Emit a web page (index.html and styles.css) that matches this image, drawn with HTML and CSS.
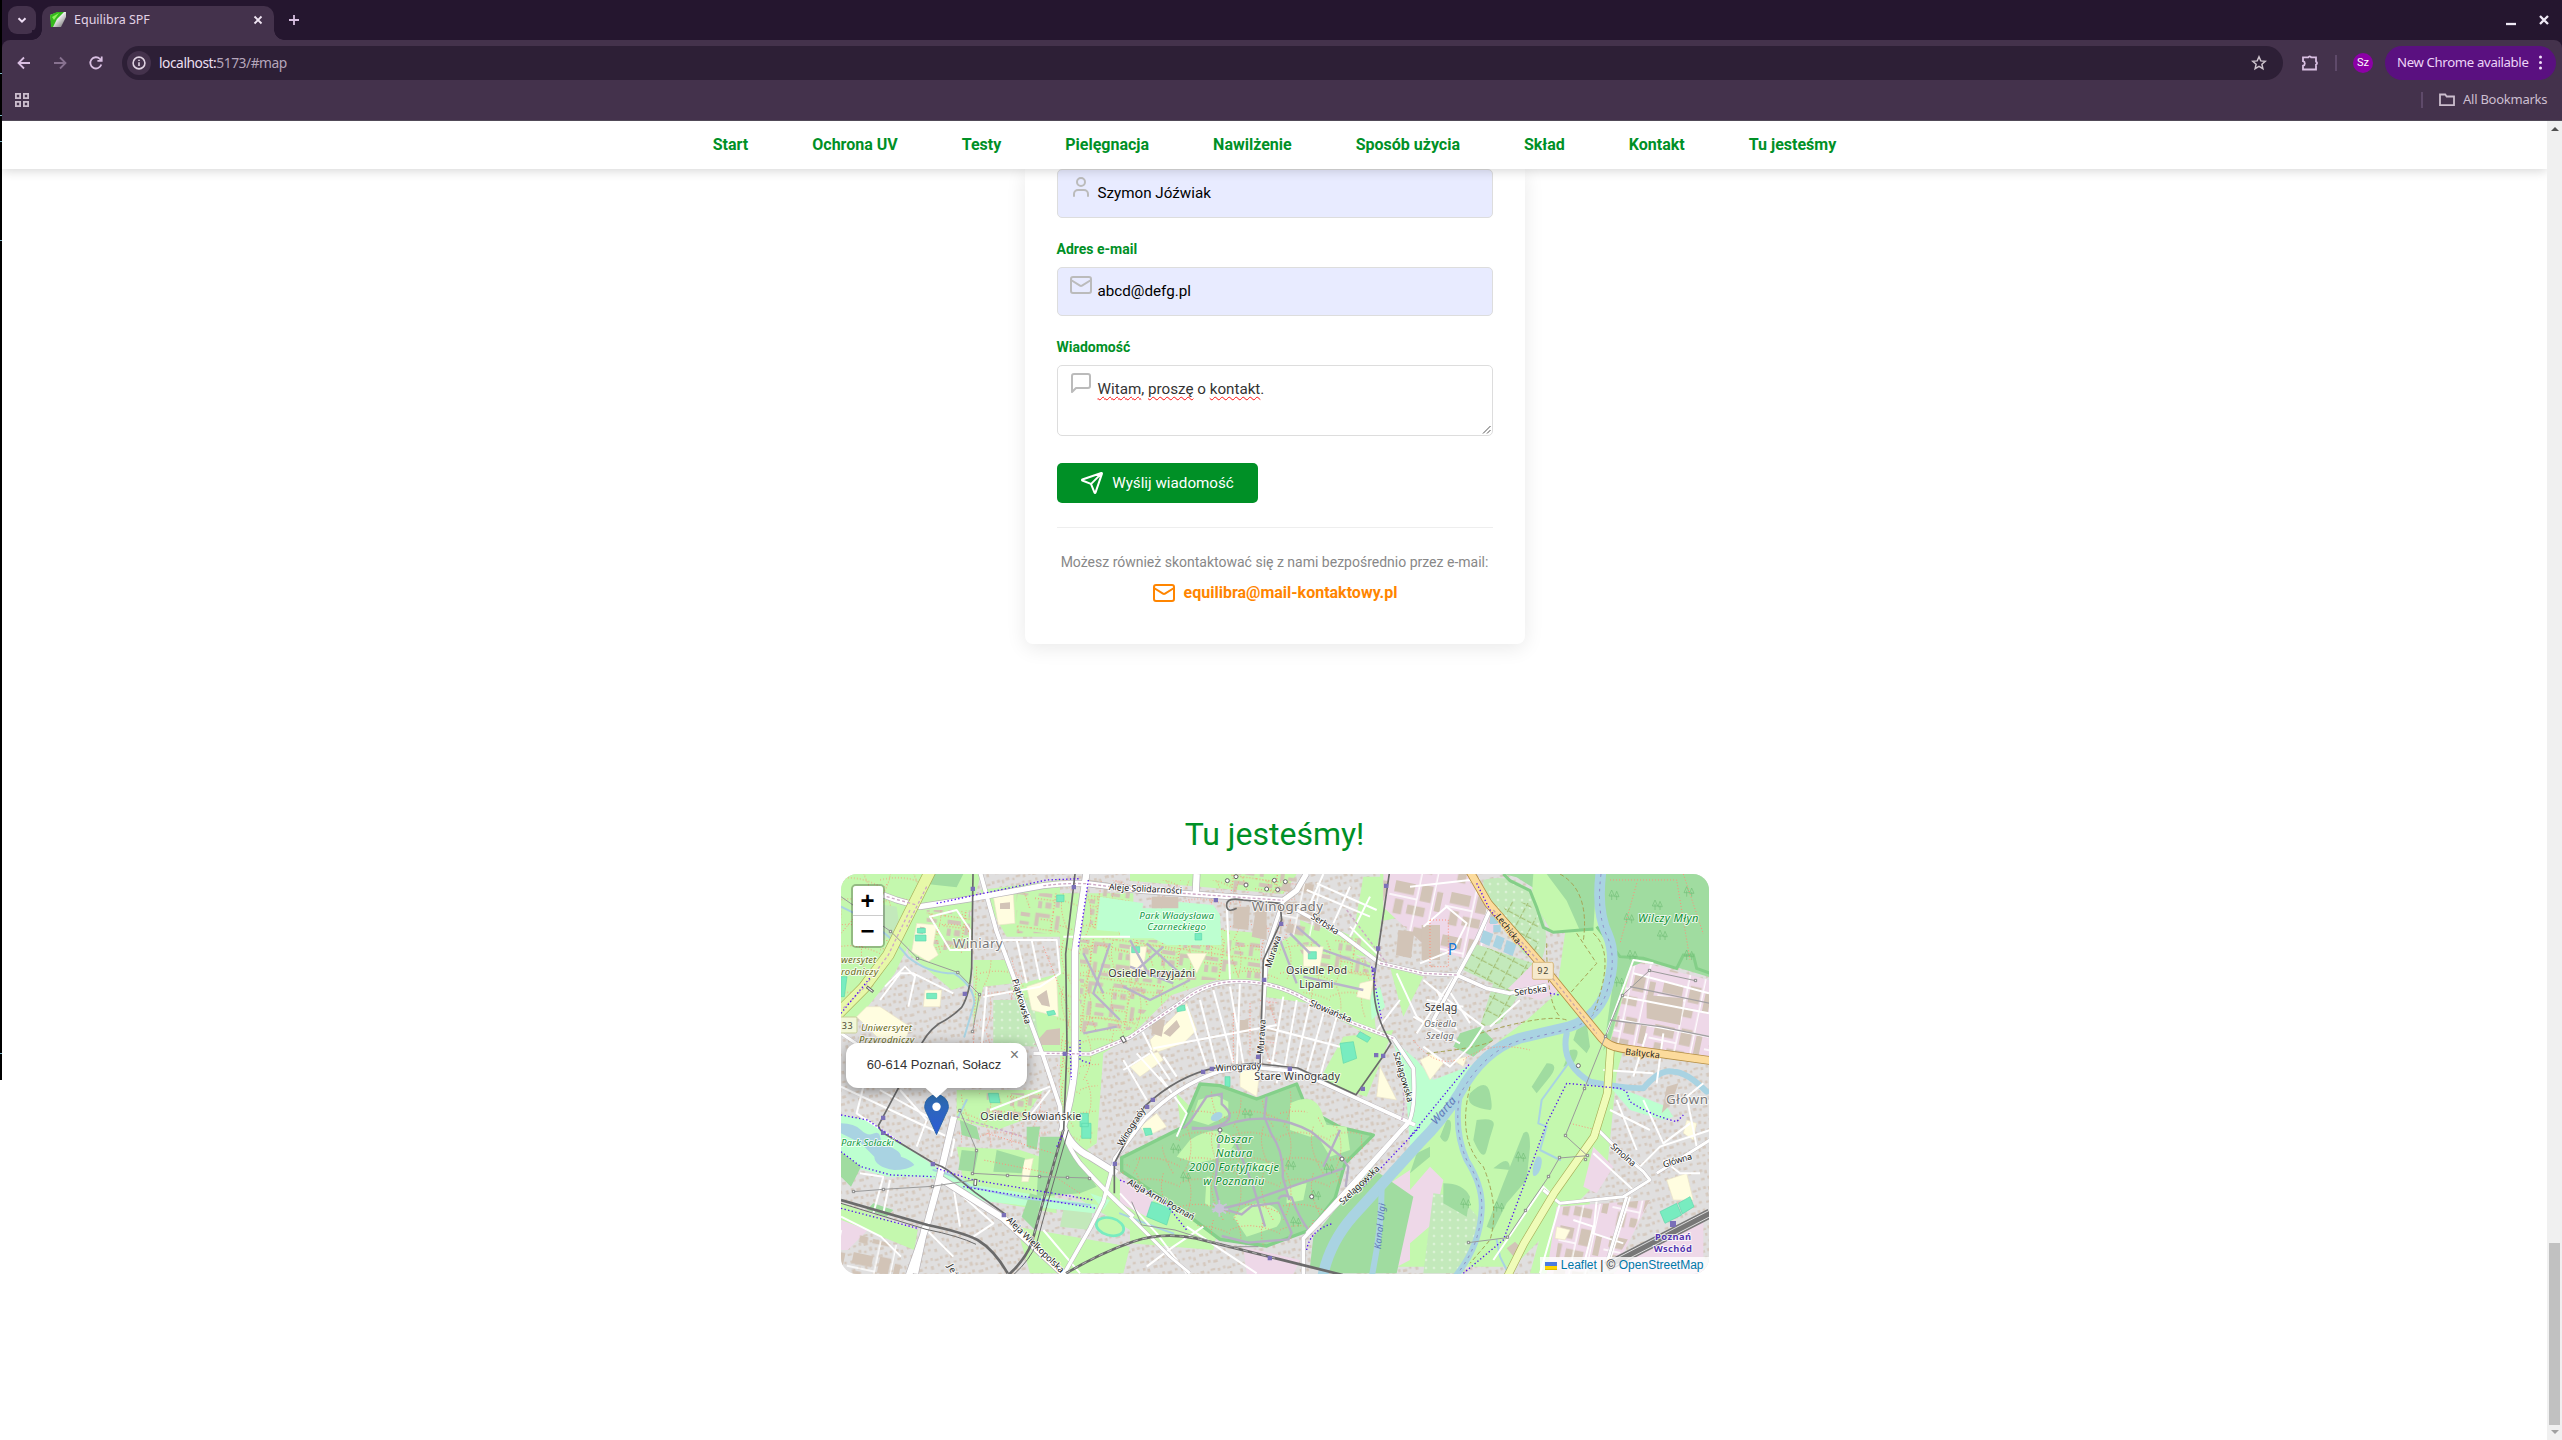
FILE: index.html
```html
<!DOCTYPE html>
<html lang="pl">
<head>
<meta charset="utf-8">
<title>Equilibra SPF</title>
<link rel="stylesheet" href="styles.css">
</head>
<body>
<div class="edge"><i></i><i></i><i></i><i></i><i></i></div>
<div class="window">
  <div class="tabstrip">
    <button class="tab-search"><svg width="12" height="12" viewBox="0 0 12 12"><path d="M2.5 4.2 6 7.7l3.500-3.500"/></svg></button>
    <div class="tab">
      <svg class="favicon" width="16" height="16" viewBox="0 0 16 16"><defs><linearGradient id="fav" x1="0" y1="0" x2="1" y2="1"><stop offset=".4" stop-color="#fff"/><stop offset="1" stop-color="#666"/></linearGradient></defs><path d="M0 3 9 0h7v5l-5 10H2z" fill="url(#fav)"/><path d="M0 3 7 0h7L7 7 3 15H1z" fill="#34b81c"/><path d="M2 5 9 1 4 8z" fill="#8df05c"/></svg>
      <span class="tab-title">Equilibra SPF</span>
      <svg width="10" height="10" viewBox="0 0 10 10"><path d="m1.500 1.500 7 7m0-7-7 7"/></svg>
    </div>
    <svg class="new-tab" width="12" height="12" viewBox="0 0 12 12"><path d="M6 1v10M1 6h10"/></svg>
    <div class="win-controls">
      <svg width="12" height="12" viewBox="0 0 12 12"><path d="M1 10h10"/></svg>
      <svg width="12" height="12" viewBox="0 0 12 12"><path d="m2 2 8 8m0-8-8 8"/></svg>
    </div>
  </div>
  <div class="toolbar">
    <div class="nav-icons">
      <svg width="16" height="16" viewBox="0 0 16 16"><path d="M14 8H3m5-5.500L2.500 8 8 13.500"/></svg>
      <svg class="dim" width="16" height="16" viewBox="0 0 16 16"><path d="M2 8h11M8 2.500 13.500 8 8 13.500"/></svg>
      <svg width="16" height="16" viewBox="0 0 16 16"><path d="M13.300 9.500A5.600 5.600 0 1 1 12 4l1.500 1.500M13.700 1.500v4.300H9.400"/></svg>
    </div>
    <div class="omnibox">
      <span class="info"><svg width="14" height="14" viewBox="0 0 14 14"><circle cx="7" cy="7" r="5.900"/><path d="M7 6.300V10M7 3.800v1.300"/></svg></span>
      <span class="url">localhost:<em>5173/#map</em></span>
      <svg width="16" height="16" viewBox="0 0 16 16"><path d="m8 1.800 1.800 4.100 4.500.4-3.400 3 1 4.400L8 11.400l-3.900 2.300 1-4.400-3.400-3 4.500-.4z"/></svg>
    </div>
    <svg class="puzzle" width="18" height="18" viewBox="0 0 18 18"><path d="M2 3.400h5.200a1.600 1.600 0 0 1 3 0h4.800v4.200a1.600 1.600 0 0 1 0 3v4.900H2v-3.800a2.300 2.300 0 0 0 0-4.500z"/></svg>
    <span class="sep"></span>
    <span class="avatar">Sz</span>
    <div class="update"><span>New Chrome available</span><i></i></div>
  </div>
  <div class="bookmarks">
    <svg width="14" height="14" viewBox="0 0 14 14"><path d="M.9.900h4.200v4.200H.9zM8.900.900h4.200v4.200H8.900zM.9 8.900h4.200v4.200H.9zM8.900 8.900h4.200v4.200H8.900z"/></svg>
    <span class="sep"></span>
    <svg width="16" height="14" viewBox="0 0 16 14"><path d="M1 12.200V1.500h5.200l1.500 2H15v8.700z"/></svg>
    <span class="bm-label">All Bookmarks</span>
  </div>
  <div class="viewport">
    <div class="page">
      <nav class="site-nav">
        <a>Start</a><a>Ochrona UV</a><a>Testy</a><a>Pielęgnacja</a><a>Nawilżenie</a><a>Sposób użycia</a><a>Skład</a><a>Kontakt</a><a>Tu jesteśmy</a>
      </nav>
      <section class="card">
        <div class="field filled">
          <svg class="icon" viewBox="0 0 24 24"><path d="M19 21v-2a4 4 0 0 0-4-4H9a4 4 0 0 0-4 4v2"/><circle cx="12" cy="7" r="4"/></svg>
          <span>Szymon Jóźwiak</span>
        </div>
        <label>Adres e-mail</label>
        <div class="field filled">
          <svg class="icon" viewBox="0 0 24 24"><rect x="2" y="4" width="20" height="16" rx="2"/><path d="m22 7-8.970 5.700a1.940 1.940 0 0 1-2.060 0L2 7"/></svg>
          <span>abcd@defg.pl</span>
        </div>
        <label>Wiadomość</label>
        <div class="field message">
          <svg class="icon" viewBox="0 0 24 24"><path d="M21 15a2 2 0 0 1-2 2H7l-4 4V5a2 2 0 0 1 2-2h14a2 2 0 0 1 2 2z"/></svg>
          <span><u>Witam</u>, <u>proszę</u> o <u>kontakt</u>.</span>
          <svg class="grip" viewBox="0 0 9 9"><path d="M1 8.500 8.500 1M5 8.500 8.500 5"/></svg>
        </div>
        <button class="send"><svg class="icon" viewBox="0 0 24 24"><path d="M14.536 21.686a.5.5 0 0 0 .937-.024l6.500-19a.496.496 0 0 0-.635-.635l-19 6.500a.5.5 0 0 0-.024.937l7.930 3.180a2 2 0 0 1 1.112 1.110zM21.854 2.147l-10.940 10.939"/></svg>Wyślij wiadomość</button>
        <div class="direct">
          <p>Możesz również skontaktować się z nami bezpośrednio przez e-mail:</p>
          <a><svg class="icon" viewBox="0 0 24 24"><rect x="2" y="4" width="20" height="16" rx="2"/><path d="m22 7-8.970 5.700a1.940 1.940 0 0 1-2.060 0L2 7"/></svg>equilibra@mail-kontaktowy.pl</a>
        </div>
      </section>
      <h2>Tu jesteśmy!</h2>
      <div class="map">
<svg class="tiles" width="868" height="400" viewBox="33 222 2604 1200">
<defs>
  <pattern id="houses" width="141" height="117" patternUnits="userSpaceOnUse" patternTransform="rotate(-14)"><path fill="#d5c9be" d="M4 4h9v8H4zM18 7h7v10h-7zM31 3h11v8H31zM50 8h7v8h-7zM62 3h14v7H62zM83 6h8v9h-8zM100 3h7v8h-7zM112 8h12v7h-12zM129 4h8v9h-8zM7 24h8v11H7zM25 27h9v7h-9zM43 24h7v8h-7zM57 28h13v8H57zM77 24h7v7h-7zM95 27h9v11h-9zM117 24h7v8h-7zM3 47h13v7H3zM22 50h8v9h-8zM37 44h9v9h-9zM53 50h8v8h-8zM70 43h9v12h-9zM86 49h8v8h-8zM101 52h12v8h-12zM122 44h9v8h-9zM6 69h8v8H6zM19 74h8v11h-8zM39 69h12v8H39zM58 72h8v8h-8zM72 67h8v9h-8zM91 73h14v7H91zM112 70h8v9h-8zM128 68h8v8h-8zM4 95h11v8H4zM24 92h8v9h-8zM44 96h8v12h-8zM60 93h8v8h-8zM76 97h13v8H76zM99 92h8v8h-8zM118 96h8v10h-8z"/></pattern>
  <pattern id="blocks" width="130" height="120" patternUnits="userSpaceOnUse" patternTransform="rotate(8)"><path fill="#d2c4b7" d="M8 8h44v12H20v28H8zM70 10h12v42H70zM94 12h28v12H94zM94 38h28v11H94zM10 66h40v12H10zM64 70h44v11H76v24H64zM12 92h12v22H12zM34 94h18v18H34z"/><path fill="none" stroke="#ff7d70" stroke-width="3" stroke-dasharray="3 6" d="M60 0v120M0 56h130M88 58l30 58M26 26h34v26M0 86h60"/></pattern>
  <pattern id="sheds" width="170" height="130" patternUnits="userSpaceOnUse" patternTransform="rotate(12)"><path fill="#d2c4b7" d="M12 12h60v34H12zM92 8h34v50H92zM140 20h18v60h-18zM20 66h26v44H20zM60 76h54v28H60z"/><path fill="none" stroke="#fff" stroke-width="4" d="M0 56h84v74M84 0v56M132 0v130"/></pattern>
  <pattern id="paths" width="150" height="140" patternUnits="userSpaceOnUse"><path fill="none" stroke="#fb8a70" stroke-width="3" stroke-dasharray="3 6" d="M0 30q60-30 150 10M20 0q30 70-10 140M0 100q80-20 150 20M100 0q-20 60 30 140"/></pattern>
  <pattern id="plots" width="42" height="42" patternUnits="userSpaceOnUse" patternTransform="rotate(28)"><path fill="none" stroke="#9fb86a" stroke-width="3" stroke-dasharray="15 7" d="M0 10h42M20 0v42"/></pattern>
  <pattern id="crosses" width="24" height="24" patternUnits="userSpaceOnUse"><path stroke="#edfbe8" stroke-width="2" d="M12 8v8M8 12h8"/></pattern>
  <linearGradient id="pin" x1="0" y1="0" x2="0" y2="1"><stop offset="0" stop-color="#2e6cad"/><stop offset="1" stop-color="#2b5bd7"/></linearGradient>
</defs>
<rect x="33" y="222" width="2604" height="1200" fill="#e0dfdf"/>
<rect x="33" y="222" width="2604" height="1200" fill="url(#houses)"/>

<g fill="#c4f8ae">
  <path d="M33 222h420l-30 110-80 50-60-40-90 180-90 110-70 60zM240 350l150-30 35 30v200l-60 20-60-50-70-60zM450 270l240-30v170l-160 0zM430 480h100l20 70-90 10-30 120zM540 560l150-40 10 250-60-10zM690 280h220v140l180 100-190 190-80 50-20 270-110 70z"/>
  <path d="M380 870h260l-60 90-80 30-120-30zM380 1040l190 10 90 30 20 160-270-50zM700 980l200 190v120l-180-110z"/>
  <path d="M900 222h500l-40 60-460-40zM870 360l420 40v150l-130-10-150 50-140 90zM1330 440l100-60 190 110 20 230-200-110-140-20zM1410 360l120 50 90 110v70l-200-60z"/>
  <path d="M1480 820l60-110 150-20-80 200-130-40zM1600 230h75l-40 250-70-50zM1660 222h120l-30 30-60 80zM1040 880l60 60 60 50-100 60zM1680 500l100 30-60 120z"/>
  <path d="M1770 1000l240-280 80-60 90-80 50-360h300l-170 600-30 300-280 280h-590l120-160z"/>
  <path d="M1480 370l90 40 40 60-160-30zM1650 222h150v110l-140 30z"/>
  <path d="M33 1210l230 80-10 60-220-90zM560 1280l340 60-20 80H600zM900 1160l260 140-10 50-250-20zM2150 1240l130-40-10 110-90 110h-80z"/>
</g>
<path fill="url(#blocks)" d="M290 330h130v120H290zM560 280h130v120H560zM750 420l150-10 150 100-150 180-150 10zM900 420h390v120H900zM1290 600h50v190h-60zM1400 430l190-20 30 120-180-20zM470 880h170l-50 80-120-10zM1200 220h200v60h-200zM780 240h120v150H780z"/>
<path fill="url(#paths)" opacity=".85" d="M33 222h240l-130 330-110 60zM290 330h140v130H290zM430 480h150l50 260-200-10zM690 240h210v160h190v160l-200 150-80 50-20 270-100 20-10-300zM900 240h500v300l-200-10zM1330 400l300 80v180l-200-60zM380 880h260l20 170-280-20z"/>

<g fill="#eed8e8">
  <path d="M1660 222h280l80 130-90 130-140-40-130-120zM2030 480l100 20 60 70-60 30-110-30zM2410 480l227 60v240l-300-40zM2620 1260v162h-270l60-60zM33 1260l80 30-60 60-20 0zM1240 1340l170 40-20 42h-140zM1680 1150l60-40v270l-80 42v-150zM1740 1170l60-70 40 40-30 130-70 60zM870 1130l100 70-20 50-80-40z"/>
  <path d="M2290 1040l60 60-50 80-40-20zM2180 1220l280-20-90 180-140 42h-80z"/>
</g>
<path fill="url(#sheds)" d="M1660 222h280l80 130-90 130-140-40-130-120zM2410 480l227 60v240l-300-40zM2200 1220l260-20-90 160-100 62h-100zM33 1290l220 60-20 72H33zM1350 250h120v160h-120z"/>

<g fill="#c3e9bb">
  <path d="M490 600h120l20 140-140-5zM130 310l70 10 10 70-50 30-60-60zM700 1230l90-20-10 80-90-10zM1810 1180l80 10 70 80-60 150h-120zM1960 240q80-20 140 30l40 80q20 80-10 140l-50-30-120-170z"/>
  <path d="M1930 430l180 60-80 80-130-60zM1990 550l80 30-60 90-60 10z"/>
</g>
<path fill="url(#crosses)" d="M490 600h120l20 140-140-5zM1810 1180l80 10 70 80-60 150h-120zM1960 240q80-20 140 30l40 80-10 140-170-200z"/>
<path fill="url(#plots)" d="M2010 300l90 10 30 80-10 70-60-60zM1930 430l180 60-80 80-130-60zM1990 550l80 30-60 90-60 10z"/>

<g fill="#bdffd0">
  <path d="M33 945l80 15 100 70 110 75 110 50 370 60-10 25-360-40-100-60-70-10-90 0-90-25-51-50z"/>
  <path d="M810 290l130 20-20 90-120-10zM870 325l130 0 40-20 110 10 20 30 5 90-165 0-40-20-100 0zM1690 720l70 60 50 60 130-50-130 190-70 60-10-140zM2340 860l70 20 100 40 20 30-30 10-100-30zM780 1180l60 20-20 30z"/>
  <path d="M1620 580l30-20 15 60-40 40z"/>
</g>
<g fill="#a9d3e2"><path d="M33 970q40 0 60 20t40 10 20 30q60 20 60 40 30 10 40 25-20 15-60 15-60-10-60-40l-40-40-60-30z"/><path d="M2120 1070q18-5 15 20t-15 35-12-10 12-45zM1980 350h16a11 11 0 0 1 0 22h-16zM1960 390l30 12-12 36-28-12zM2000 405l24 10-12 34-24-10zM2030 420l30 12-12 36-28-12zM1990 375h22v22h-22z"/></g>

<g fill="#fffde0" stroke="#ece4c8" stroke-width="2">
  <path d="M260 370l60 5-10 60 15 30-30 20-50-30zM490 290l60-10 5 90-50 5zM150 620l90 60-20 60-80-30-60-60 30-30zM590 560l90-30 5 120-80-20zM285 570h50l-5 50h-50zM580 1080l30-5-15 70h-20zM960 720l110-110 30 80-40 40-90 30zM900 440h50l-10 70h-40zM930 830l70-50-20-30-80 50zM1070 460l60 0-30 60zM1420 440l60 0-10 60-50 0zM1590 550l40-10-10 60-40-10zM1230 810l60 0-10 80-50-30zM1650 800l50 100-60-10zM930 980l50-40 30 40-60 30zM1770 780l40-20 30 30-40 50zM1870 780l40-10-10 30zM2510 1140l60-20 20 80-60 0zM2570 960l30 10-10 50-30-20zM2180 1280l40 10-15 30-30-5z"/>
</g>
<path fill="#d2c4b7" d="M650 690l40-5v50l-80 0zM965 290l80 0v35l-80 0zM1210 320l50 0-5 70-45-5zM1280 310l30 0v110l-45-10zM1775 375h55v105h-55zM1705 390l48 5-10 80-45-10zM965 650l40 10-10 50-30-10zM2450 585l110 10-10 80-100-20zM2510 860l35-10-20 60-30 30zM1230 660l25 0v40h-25zM620 590l30-20 10 50-25-5zM2030 1345l25-20 20 20-20 30zM270 380l14 2-5 20-14-2zM510 310l30-3v20h-30zM1000 700l40-40 10 20-30 30z"/>
<g fill="#78ecc0" stroke="#5dd8ac" stroke-width="2">
  <path d="M262 385h24v14h-24zM256 405h32v18h-32zM290 580h30v16h-30zM660 1080l50-10 20 10-30 80-50-10zM750 940h25v40h-25zM755 970h28v45h-28zM650 635l22-4 5 12-22 4zM475 880l30 0 5 28-30 0zM393 1082h22v24h-22zM680 285h22v20h-22zM33 530l18 0-8 60-10 0zM1530 730l40-5 10 50-40 15zM1590 695l32 18-10 14-32-18zM1095 400l20 0 0 20-20 0zM905 440h24v18h-24zM1040 620l24-5 2 16-24 4zM965 1205l60 20-15 50-60-25zM940 985l22 0 5 18-20 4zM2490 1235l50-25 15 35-50 25zM2545 1210l35-20 12 30-35 22zM1185 830l15 0 0 30-15 0zM1435 455h24v22h-24z"/>
</g>
<ellipse cx="840" cy="1280" rx="42" ry="26" fill="#c4f8ae" stroke="#78ecc0" stroke-width="8" transform="rotate(15 840 1280)"/>

<g fill="#a0dca0">
  <path d="M305 222h95l-20 40-90-10zM390 960l50 20 10 40-55-15zM395 1050l50 5-12 60-48-5zM500 1050l85 25-10 45-85-5zM590 980l40 0-10 70-30-10zM630 1010l70 0 100 150-50 20-130 10zM600 1180l35 10-20 100-40-40zM33 1055l60 45-30 60-30-30zM130 1210l60 20-20 20-60-20z"/>
  <path d="M2020 222h280l-10 170-90 0-60-110-80-50zM2310 222h330v310l-100-30-90-20-50 20-60 220-20 30 40-280-40-80z"/>
  <path d="M1620 1100l130 90-50 230h-180l-80-20 10-90zM1890 700l60-20 40 40-60 50-60-30zM2240 690l30-20 10 70-10 20-40-40z"/>
  <path d="M1920 880q50-50 60 0t0 50q-80-10-60-50zM1940 960q60-10 50 20t-20 70-40-30zM2080 1000q20-20 20 40l-10 100-60 70-40 80-20-10 50-130zM1850 960q20-5 10 40t-30 10zM2150 790q40 0 10 40l-40 50-15-20zM2010 1090q30-20 30 20l-50-5zM1760 1060l40-20 0 30-60 50zM1840 1150q60 0 80 40l-10 60-70-40zM2220 750q40-10 10 40l-30 10z"/>
</g>
<path d="M2110 222q-10 110 10 100 40 60 40 70 50 5 90 0l-40-90-60-80z" fill="#c4f8ae"/>
<path d="M2020 222l20 20 60 30 20 50 20 60 30 15 120-10M2300 380l70 90 70 5 100 30 20-40h30l10 40 40 15" fill="none" stroke="#84cf88" stroke-width="9"/>

<!-- forest reserve -->
<path fill="#a0dca0" stroke="#84d08a" stroke-width="10" stroke-linejoin="round" d="M1110 852l60 5 110 40 120-45 30 75 100 55 100 23-85 85-30 105-75 95-130 48-140-20-100-75-195-130v-40l180-90z"/>
<g fill="#c4f8ae"><path d="M1085 960l20-60 50-15 40 20v40l-60 30zM1080 1020q60-40 110-20l30 20-30 50-90 20-60-20zM1380 910q80-40 100 40l20 50-60 10-60-20zM1440 970l110 10 10 70-60 20zM1210 1250q60-60 120-30 40 30 10 60l-90 30zM1370 1160l60-10-10 50-50 10zM1270 1090l60 0-10 20-50-5zM1130 1130l10 0 0 90-15-10z"/></g>
<path fill="url(#paths)" d="M1110 862l170 45 120-45 30 75 200 80-85 85-30 105-75 95-130 40-140-20-295-195v-30l180-90z"/>
<g fill="none" stroke="#b5aec3" stroke-width="7"><path d="M1060 985l20-20 50-75 45-8v30q60 50-30 70l-60 5M1170 990l-15 170 15 60M1085 983l60 5 70-22q120-30 230 30l90 75 20 30-8 60M1310 890l-7 60 20 50q40 60 35 130l20 70M1160 1230l80-20 300-105M1210 1010l60 150 35 120M1530 990l-50 110M1175 1225l60 18 30-25 80-10 40 90-10 20-120 10-80-20M1345 1198q10-20 40-5 20 60 60 110"/></g>
<g stroke="#c9c4d8" stroke-width="5"><path d="M1148 1210l40 30M1190 1212l-42 24M1168 1200v50M1145 1228h50"/></g>
<circle cx="1168" cy="1225" r="14" fill="#c9c4d8"/><ellipse cx="1160" cy="950" rx="19" ry="12" fill="#a9d3e2" transform="rotate(-30 1160 950)"/>
<g fill="none" stroke="#74bf78" stroke-width="2"><path id="tree" d="M1030 1060v-18m-8 6 8-18 8 18zM1045 1060v-14m-6 4 6-16 7 16z"/><use href="#tree" x="30" y="85"/><use href="#tree" x="215" y="-105"/><use href="#tree" x="345" y="50"/><use href="#tree" x="420" y="140"/><use href="#tree" x="360" y="220"/><use href="#tree" x="460" y="60"/><use href="#tree" x="1315" y="-760"/><use href="#tree" x="1445" y="-730"/><use href="#tree" x="1540" y="-770"/><use href="#tree" x="1460" y="-640"/><use href="#tree" x="1540" y="-580"/><use href="#tree" x="1370" y="-580"/><use href="#tree" x="1360" y="-690"/><use href="#tree" x="1330" y="-500"/><use href="#tree" x="1035" y="25"/><use href="#tree" x="870" y="165"/><use href="#tree" x="970" y="175"/></g>

<!-- waterways -->
<g fill="none" stroke="#a9d3e2" stroke-linecap="round" stroke-linejoin="round">
  <path stroke-width="32" d="M2313 215q-15 120 20 190 30 70-5 170-30 80-110 105l-150 35q-110 35-180 165-50 80-120 150l-200 220q-70 80-90 180"/>
  <path stroke-width="18" d="M1890 880q-20 110 20 200 50 80 45 150-5 110-80 200M1655 1160q0 130-30 270M2210 700q-20 90 70 145 100 20 160 20 50-60 90-50 40 0 100 60"/>
  <path stroke-width="6" d="M33 320q130 60 200 150 60 50 140 50 60 40 60 90l-30 100M410 900q-20 40-25 50M310 1110q80 20 110 50l160 35 200 20M2215 790l-80 110-10 70 25 10-20 70 60 30M870 1240q100 40 160 60M2000 1320l10 50 20 40"/>
</g>
<g fill="none" stroke="#8d8bc4" stroke-width="3" stroke-dasharray="8 14"><path d="M2313 222q-15 120 20 190 30 70-5 170-30 80-110 105l-150 35q-110 35-180 165M1890 880q-20 110 20 200 50 80 45 150-5 110-80 200"/></g>
<g fill="none" stroke="#a6a255" stroke-width="3" stroke-dasharray="13 8"><path d="M2290 400q70 60 0 240M2190 222q90 50 70 200M1950 700q200-60 260-40M1920 860q-40 160 40 240 50 120 20 220l-60 70M2150 430q0 180 40 220M1790 760q180-20 200-40M2240 400l60 90-80 90"/></g>

<!-- minor streets -->
<g fill="none" stroke="#fff" stroke-width="6" stroke-linejoin="round">
  <path d="M530 420l-60 10M500 420h180l10 100-60 40-170 30M560 420l30 130M605 420l25 120M470 560l-15 180M150 600l60-80h40l120 60M165 560l60-60 30 30-20 90M300 350l80-20 40 60v60h-60zM100 860l-20 80 120 80M150 870l180 100M210 870l80 90-30 80M33 860l340 160-10 50M480 930l180-70M590 960l70-90M700 410h200M90 1120l70 10-30 110M180 1140l-20 100M370 1160l20 120M400 1190l90 80-60 40M33 1250l120 60 60 60M290 1290l80 80M640 1290l110 130"/>
  <path d="M970 745l370-70M935 690l30 60M1070 620l60 180M1110 600l50 200M1150 570l60 220M1200 560l40 230M960 760l-80 50M880 780l70 120M920 760l90 100M960 750l60 90M1000 770l40 60M1300 680l230 60M1360 590l-35 210M1400 600l-35 200M1440 610l-45 200M1480 640l-50 180M1520 650l-50 180M1310 780l150 50M990 830l80 110-30 70M1340 850l10-50M870 1180l110 120 90 120M1070 1280l90 60 120 80M950 1400l80-60 90-60M1230 540l-10 270M1190 310l10 230M1430 270l190 80M1480 222l-40 90M1560 260l-50 110M1620 290l-60 120M1460 250l180 80M1560 380l90 90M1710 600l-70 90M1700 520l60 130 40 30"/>
  <path d="M1740 260l180-20 60 60-20 80-80 140-120 180M1780 380l70-60 60 50-40 80-100 40M1780 540l100 80 80 60-40 60-60 60-80-60M1820 570l60 120M1850 560l70 110M1790 600l110 20M1750 650l140 80M1980 680l90-80M2330 700l80-220 60 10M2410 520l227 60M2380 590l257 50M2370 660l267 50M2450 700l-40 130M2500 700l-20 150M2320 810l150 10M2310 1000l120 100 60-60 150-50M2340 930l120 60M2360 900l60 150M2440 900l60 130 80-60M2290 1060l120 110M2500 1080l50 40 60 0M2180 1200l-40-40-150 220M2190 1210l-60 210M2230 1260l60 20-30 120M2400 1190l-60 190M2300 1200l-10 100 90 30M2620 850l-50 40 30 150"/>
</g>
<g fill="none" stroke="#b9b3c9" stroke-width="7"><path d="M760 460l60 120M840 430l-50 150 80 80M900 420l60 110M950 430l100 90M1000 440l-80 70M880 560l80 40 120-60M1350 420l50 130M1380 400l60 60M1420 530l180 40M1480 450l140 50M760 700l100-20M1400 380l70 60M900 500l130 50"/></g>
<g fill="none" stroke="#ff8d7a" stroke-width="3" stroke-dasharray="3 6"><path d="M33 400l60-70 80-80M440 500l-10 240M640 440l80 200-30 200M750 1180l-90-60-200-40M470 1000l200 60M1210 640v150M1260 610v160M1800 360h55v140h-55zM2340 870l-30 110M2220 970l80 20M1750 720q60 80 130 60M1900 780q80-60 200-30M2340 240h200l40 240M2420 250l-50 180M2560 222l60 180"/></g>

<!-- main roads -->
<g fill="none" stroke="#b8b4b8" stroke-linejoin="round">
  <path stroke-width="20" d="M160 285l40 15 70 20 160-25 210-38q60-8 130-6l160 20 430 30 40-30 30-51"/>
  <path stroke-width="15" d="M450 215l50 180 140 375 50 150q0 90 60 170 80 90 160 160"/>
  <path stroke-width="23" d="M770 215q-20 130-35 240v340q-10 110-40 200M700 980q20 60 80 90l80 50M372 950l-50 210-30 110-55 155M285 1280l-30 140M330 1135l190 120 190 175M1100 222l-3 60"/>
  <path stroke-width="14" d="M610 760l170 2 120-50 160-110q70-55 150-57 120-5 220 55l140 70 120 45 60 90q10 160-30 180l-190 220-110 110v110M700 1425l80-140 40-80 35-130 90-120q100-100 220-140l100-14 140 14 350 160M1360 300l-50 150-20 350M1400 330l130 70 120 90 130 30 100 5 90 40 70 15 110-25M1820 670l-10-10 70-130 60-110 40-90"/>
  <path stroke-width="11" d="M2300 985l80 80 60 50 20 25-80 50-190 20-50-40M2480 1120l160-100M2390 1190l-60 200M900 1250l120 120 60 50M33 700l60 40 40 60M1430 1300l300-330"/>
</g>
<g fill="none" stroke="#fff" stroke-linejoin="round">
  <path stroke-width="16" d="M160 285l40 15 70 20 160-25 210-38q60-8 130-6l160 20 430 30 40-30 30-51"/>
  <path stroke-width="12" d="M450 215l50 180 140 375 50 150q0 90 60 170 80 90 160 160"/>
  <path stroke-width="19" d="M770 215q-20 130-35 240v340q-10 110-40 200M700 980q20 60 80 90l80 50M372 950l-50 210-30 110-55 155M285 1280l-30 140M330 1135l190 120 190 175M1100 222l-3 60"/>
  <path stroke-width="11" d="M610 760l170 2 120-50 160-110q70-55 150-57 120-5 220 55l140 70 120 45 60 90q10 160-30 180l-190 220-110 110v110M700 1425l80-140 40-80 35-130 90-120q100-100 220-140l100-14 140 14 350 160M1360 300l-50 150-20 350M1400 330l130 70 120 90 130 30 100 5 90 40 70 15 110-25M1820 670l-10-10 70-130 60-110 40-90"/>
  <path stroke-width="9" d="M2300 985l80 80 60 50 20 25-80 50-190 20-50-40M2480 1120l160-100M2390 1190l-60 200M900 1250l120 120 60 50M33 700l60 40 40 60M1430 1300l300-330"/>
</g>
<g fill="none" stroke="#cda9c6" stroke-width="4" stroke-dasharray="9 6"><path d="M640 257q60-8 130-6l160 20 430 30M650 760l130 2 120-50 160-110q70-55 150-57 120-5 220 55l140 70 120 45M1650 490l130 30 100 5M1695 760q40 130 20 200M380 950l200 60M1550 330l120 160"/></g>
<g fill="none" stroke-linejoin="round">
  <path stroke="#a8b05a" stroke-width="36" d="M305 205l-55 110-75 150-75 100-90 90"/><path stroke="#e7f8a8" stroke-width="32" d="M305 205l-55 110-75 150-75 100-90 90"/>
  <path stroke="#cda9c6" stroke-width="4" stroke-dasharray="9 7" d="M170 290l90 25M240 330l-65 135-75 100-60 60M290 260l-60 120"/>
  <path stroke="#a8b05a" stroke-width="25" d="M2342 740l-10 140-40 130-120 170-90 150-50 100"/><path stroke="#effcb8" stroke-width="21" d="M2342 740l-10 140-40 130-120 170-90 150-50 100"/>
  <path stroke="#b48e44" stroke-width="26" d="M1920 215l55 95 165 190 175 215q20 25 60 30l275 38"/><path stroke="#fcdb9c" stroke-width="21" d="M1920 215l55 95 165 190 175 215q20 25 60 30l275 38"/>
  <path stroke="#c9a9a5" stroke-width="4" stroke-dasharray="9 7" d="M1990 330l150 170 160 200"/>
</g>

<!-- railways -->
<g fill="none" stroke="#6b6b6b" stroke-linejoin="round">
  <path stroke-width="5" d="M429 222l-4 280q-5 80-30 120-30 30-70 50-40 30-60 80l-120 225q5 15 20 25l150 90q20 5 40 20l80 65 90 65M735 222l-28 240 4 280-10 250M853 1180v-90l90-170q100-95 220-118l110-12 130 14 175 80 80-114 25-40q-60-100-50-200l45-310M1290 800l10-320 55-120-5-50-110-10q-50-10-50 15t30 10"/>
  <path stroke-width="8" d="M700 990l-65 230-30 110q-20 50-70 95M708 1420q100-60 200-95 90-30 190-10l240 60 200 50M33 1200l260 75q100 20 150 45 50 30 90 100"/>
  <path stroke-width="3" d="M715 990l-65 230-30 110q-20 50-70 95M33 1210l255 78q100 20 150 45"/>
  <path stroke-width="30" stroke="#777" d="M2330 1400l310-160"/><path stroke-width="3" stroke="#ddd" d="M2330 1390l310-160M2340 1405l300-155"/>
  <path stroke-width="4" stroke="#a3a0a3" d="M2340 660l150 20 150 30M2400 560l240 50"/>
</g>
<path d="M700 990l-65 230-30 110M708 1420q100-60 200-95 90-30 190-10l240 60" fill="none" stroke="#ddd" stroke-width="2" stroke-dasharray="14 14"/>
<path fill="#7b70b8" d="M422 260h13v13h-13zM725 255h13v13h-13zM398 575h13v13h-13zM698 755h13v13h-13zM153 947h13v13h-13zM153 992h13v13h-13zM302 1086h13v13h-13zM515 1239h13v13h-13zM848 1085h13v13h-13zM945 914h13v13h-13zM962 893h13v13h-13zM1113 809h13v13h-13zM1139 800h13v13h-13zM1278 764h13v13h-13zM1373 800h13v13h-13zM1296 533h13v13h-13zM1347 365h13v13h-13zM1151 294h13v13h-13zM1592 860h13v13h-13zM1653 761h13v13h-13zM1632 759h13v13h-13zM1625 503h13v13h-13zM1638 439h13v13h-13zM1662 251h13v13h-13zM1313 1368h13v13h-13zM2520 1263h18v18h-18z"/>
<!-- footways, cycleways and power lines -->
<g fill="none" stroke="#5212f0" stroke-width="4" stroke-dasharray="4 7"><path d="M33 640l90-110M320 310l330-70 100-4M775 240l-30 200M33 945l80 15 100 70M33 1055l60 45 90 25 130 5M320 1105l110 35 360 60M400 1160l400 65M33 1225l230 60M720 740l4 100M750 720v60l30 10M680 1040l20-40M870 1140l120 50 80 100M1600 1160l170-180M1740 1010l180-220M1940 250l40 80 120 140M2160 580l30 5M1430 1350q10-60 80-80M1900 1420l120-100 90-240 40-110 60-120 160 15 20 10 10 30q60 40 140 60l20-20M1625 500l30 160"/></g>
<g fill="none" stroke="#9a9a9a" stroke-width="3"><path d="M33 290l150 105 80 80 120 42 65 66-20 110M389 930l50 120-10 70 105 6 96 4 150 4M70 1175l90-7 147-9 130-20M905 1205l30 70 100 15 160 50 90 0M2458 512l-82 75-50 122-63 157-57 141 66 60-84 7-33 57-70 102-53 80-118 15M2458 512l138 30"/></g>
<g fill="#eee" stroke="#777" stroke-width="2.500"><path d="M178 391h7v7h-7zM259 472h7v7h-7zM380 514h7v7h-7zM445 580h7v7h-7zM424 691h7v7h-7zM386 928h7v7h-7zM436 1048h7v7h-7zM424 1117h7v7h-7zM529 1123h7v7h-7zM625 1126h7v7h-7zM709 1129h7v7h-7zM775 1132h7v7h-7zM67 1171h7v7h-7zM157 1165h7v7h-7zM304 1156h7v7h-7zM2455 508h7v7h-7zM2593 538h7v7h-7zM2374 583h7v7h-7zM2323 706h7v7h-7zM2260 862h7v7h-7zM2203 1003h7v7h-7zM2269 1063h7v7h-7zM2263 1075h7v7h-7zM2185 1069h7v7h-7zM2152 1126h7v7h-7zM2083 1228h7v7h-7zM2029 1308h7v7h-7zM1912 1324h7v7h-7z"/></g>
<g fill="#fff" stroke="#666" stroke-width="3"><rect x="-11" y="-3" width="22" height="6" transform="translate(120 568)rotate(38)"/><rect x="-9" y="-4" width="18" height="8" transform="translate(436 1147)rotate(95)"/><rect x="-9" y="-5" width="18" height="10" transform="translate(880 718)rotate(60)"/><circle cx="1192" cy="242" r="6"/><circle cx="1218" cy="230" r="6"/><circle cx="1248" cy="255" r="6"/><circle cx="1310" cy="267" r="6"/><circle cx="1333" cy="241" r="6"/><circle cx="1343" cy="269" r="6"/><circle cx="1366" cy="245" r="6"/><circle cx="1170" cy="990" r="6"/><circle cx="1536" cy="1077" r="6"/><circle cx="1445" cy="1190" r="6"/><circle cx="2245" cy="797" r="6"/></g>

<!-- labels -->
<g class="labels">
  <g class="suburb"><text x="369" y="443" textLength="149">Winiary</text><text x="1265" y="334" textLength="214">Winogrady</text><text x="2508" y="912" textLength="150">Główna</text></g>
  <g class="quarter"><text x="835" y="532" textLength="260">Osiedle Przyjaźni</text><text x="451" y="961" textLength="303">Osiedle Słowiańskie</text><text x="1368" y="521" textLength="183">Osiedle Pod</text><text x="1408" y="564" textLength="102">Lipami</text><text x="1273" y="840" textLength="257">Stare Winogrady</text><text x="1784" y="633" textLength="98">Szeląg</text></g>
  <g class="estate"><text x="1782" y="681" textLength="97">Osiedla</text><text x="1788" y="717" textLength="84">Szeląg</text></g>
  <g class="park"><text x="33" y="1039" textLength="158">Park Sołacki</text><text x="928" y="357" textLength="224">Park Władysława</text><text x="952" y="391" textLength="176">Czarneckiego</text></g>
  <g class="park big"><text x="1157" y="1028" textLength="110">Obszar</text><text x="1157" y="1070" textLength="110">Natura</text><text x="1077" y="1113" textLength="270">2000 Fortyfikacje</text><text x="1120" y="1156" textLength="183">w Poznaniu</text><text x="2424" y="365" textLength="181">Wilczy Młyn</text></g>
  <g class="school"><text x="33" y="489" textLength="106">wersytet</text><text x="33" y="524" textLength="112">rodniczy</text><text x="93" y="693" textLength="153">Uniwersytet</text><text x="87" y="728" textLength="166">Przyrodniczy</text></g>
  <g class="street">
    <text transform="translate(836 270)rotate(3)" textLength="220">Aleje Solidarności</text>
    <text transform="translate(545 540)rotate(73)" textLength="140">Piątkowska</text>
    <text transform="translate(1322 505)rotate(-72)" textLength="100">Murawa</text>
    <text transform="translate(1300 762)rotate(-86)" textLength="103">Murawa</text>
    <text transform="translate(1441 354)rotate(33)" textLength="94">Serbska</text>
    <text transform="translate(1437 616)rotate(23)" textLength="134">Słowiańska</text>
    <text transform="translate(1157 814)rotate(-3)" textLength="137">Winogrady</text>
    <text transform="translate(876 1040)rotate(-57)" textLength="130">Winogrady</text>
    <text transform="translate(1690 758)rotate(74)" textLength="156">Szelągowska</text>
    <text transform="translate(1538 1216)rotate(-44)" textLength="156">Szelągowska</text>
    <text transform="translate(890 1152)rotate(29)" textLength="225">Aleja Armii Poznań</text>
    <text transform="translate(528 1262)rotate(44)" textLength="228">Aleja Wielkopolska</text>
    <text transform="translate(352 1398)rotate(62)" textLength="40">Jeż</text>
    <text class="on-road" transform="translate(1995 350)rotate(52)" textLength="105">Lechicka</text>
    <text transform="translate(2054 587)rotate(-7)" textLength="98">Serbska</text>
    <text class="on-road" transform="translate(2385 764)rotate(6)" textLength="104">Bałtycka</text>
    <text transform="translate(2340 1042)rotate(41)" textLength="90">Smolna</text>
    <text transform="translate(2502 1103)rotate(-17)" textLength="90">Główna</text>
  </g>
  <g class="river"><text transform="translate(1818 976)rotate(-50)" textLength="96">Warta</text><text class="small" transform="translate(1652 1348)rotate(-84)" textLength="138">Kanał Ulgi</text></g>
  <g class="station"><text x="2475" y="1320" textLength="108">Poznań</text><text x="2471" y="1356" textLength="115">Wschód</text></g>
  <text class="parking" x="1853" y="465">P</text>
</g>
<g class="shield"><rect x="2107" y="487" width="63" height="51" rx="5" fill="#f6e9cd" stroke="#d8b97f" stroke-width="3"/><text x="2122" y="523" textLength="33">92</text><rect x="15" y="651" width="66" height="48" rx="5" fill="#f2f7d8" stroke="#c8cf98" stroke-width="3"/><text x="35" y="687" textLength="33">33</text></g>
</svg>
        <div class="zoom"><b>+</b><b>−</b></div>
        <svg class="marker" width="41" height="41" viewBox="0 0 41 41"><path d="M13 40 34 17q6 8-2 13z" opacity=".3"/><path d="M12.500.700A11.900 11.900 0 0 0 .7 12.600c0 3 1.400 5.300 3 8.400L12.500 40.500 21.400 21c1.600-3.100 3-5.400 3-8.400A11.900 11.900 0 0 0 12.500.700z" fill="url(#pin)" stroke="#2a65a8"/><circle cx="12.500" cy="12.700" r="4.200" fill="#fff"/></svg>
        <div class="popup"><span>60-614 Poznań, Sołacz</span><i>×</i></div>
        <div class="attribution"><svg width="12" height="8" viewBox="0 0 12 8"><path fill="#4C7BE1" d="M0 0h12v4H0z"/><path fill="#FFD500" d="M0 4h12v3H0z"/><path fill="#E0BC00" d="M0 7h12v1H0z"/></svg><a>Leaflet</a> | © <a>OpenStreetMap</a></div>
      </div>
    </div>
    <div class="scrollbar"><i class="up"></i><i class="thumb"></i><i class="down"></i></div>
  </div>
</div>
</body>
</html>
```
FILE: styles.css
```css
* { box-sizing: border-box; }
body { margin: 0; width: 2562px; height: 1440px; overflow: hidden; display: flex; background: #fff; font-family: Roboto, sans-serif; color: #333; }
button { font: inherit; border: 0; padding: 0; margin: 0; }
.edge { width: 2px; height: 1080px; background: #000; flex: none; display: flex; flex-direction: column; }
.edge i { height: 1px; background: #7fb3c4; }
.edge i:nth-child(1) { margin-top: 73px; }
.edge i:nth-child(2) { margin-top: 41px; }
.edge i:nth-child(3) { margin-top: 25px; }
.edge i:nth-child(4) { margin-top: 98px; }
.edge i:nth-child(5) { margin-top: 812px; }
.window { flex: 1; min-width: 0; display: flex; flex-direction: column; height: 1440px; background: #25162f; }
.window svg { fill: none; flex: none; }

/* browser chrome */
.tabstrip, .toolbar, .bookmarks { font-family: "Noto Sans", "Open Sans", sans-serif; display: flex; align-items: center; }
.tabstrip svg, .toolbar svg, .bookmarks svg { stroke: #d9bfe2; stroke-width: 1.8; }
.tabstrip { height: 40px; padding: 6px 12px 0 6px; align-items: flex-start; }
.tab-search { width: 28px; height: 28px; border-radius: 9px; background: #44324c; display: grid; place-items: center; }
.tab-search svg { stroke: #f0dff6; stroke-width: 2; }
.tab { position: relative; margin-left: 6px; width: 232px; height: 34px; border-radius: 10px 10px 0 0; background: #44324c; display: flex; align-items: center; padding: 0 11px 6px 8px; }
.tab::before, .tab::after { content: ""; position: absolute; bottom: 0; width: 10px; height: 10px; }
.tab::before { left: -10px; background: radial-gradient(circle at 0 0, #25162f 9.500px, #44324c 10px); }
.tab::after { right: -10px; background: radial-gradient(circle at 100% 0, #25162f 9.500px, #44324c 10px); }
.tab .favicon { stroke: none; margin-right: 8px; }
.tab > svg:last-child { stroke: #f0e6f3; }
.tab-title { flex: 1; color: #e2d3e6; font-size: 12.500px; line-height: 16px; margin-top: -1px; }
.new-tab { margin: 8px 0 0 14px; }
.win-controls { margin-left: auto; display: flex; gap: 21px; padding-top: 8px; }
.tabstrip .win-controls svg { stroke: #efe9f5; stroke-width: 2.300; }
.toolbar { height: 46px; padding: 0 6px 0 14px; background: #44324c; border-radius: 8px 8px 0 0; }
.nav-icons { display: flex; gap: 20px; }
.nav-icons .dim { opacity: .45; }
.omnibox { margin-left: 18px; width: 2161px; height: 34px; border-radius: 17px; background: #2d1f36; display: flex; align-items: center; padding: 0 16px 0 5px; }
.omnibox > svg { stroke-width: 1.500; stroke: #cdc3cd; }
.info { width: 24px; height: 24px; border-radius: 50%; background: #44324c; display: grid; place-items: center; }
.toolbar .info svg { stroke-width: 1.600; stroke: #e0d3e2; }
.url { flex: 1; margin-left: 8px; font-size: 13.800px; line-height: 18px; margin-top: -1px; letter-spacing: -.47px; color: #ecdff0; }
.url em { font-style: normal; color: #b5a6bb; }
.puzzle { margin-left: 18px; }
.sep { width: 2px; height: 16px; background: #5f4a6a; }
.toolbar .sep { margin-left: 16px; }
.avatar { margin-left: 16px; width: 20px; height: 20px; border-radius: 50%; background: #8c00a6; color: #fff; font: 11px/20px Roboto, sans-serif; text-align: center; }
.update { margin-left: 12px; width: 171px; height: 34px; border-radius: 17px; background: #5a1080; display: flex; align-items: center; padding: 0 14px 2px 12px; color: #edd4f8; font-size: 13.200px; letter-spacing: -.35px; white-space: nowrap; }
.update i { margin-left: auto; width: 3px; height: 3px; border-radius: 50%; background: #f4e2fa; box-shadow: 0 -5.500px #f4e2fa, 0 5.500px #f4e2fa; }
.bookmarks { height: 35px; padding: 0 15px 7px 13px; background: #44324c; border-bottom: 1px solid #514a58; }
.bookmarks svg { stroke: #cbbdcd; }
.bookmarks .sep { margin-left: auto; margin-right: 16px; }
.bm-label { margin-left: 8px; width: 84px; white-space: nowrap; color: #cdbfd0; font-size: 13px; letter-spacing: -.25px; line-height: 18px; margin-top: -1px; }

/* page */
.viewport { flex: 1; min-height: 0; display: flex; background: #fff; }
.page { flex: 1; min-width: 0; display: flex; flex-direction: column; align-items: center; overflow: hidden; }
.site-nav { z-index: 5; align-self: stretch; flex: none; height: 48px; padding-bottom: 1px; display: flex; justify-content: center; align-items: center; gap: 64px; background: #fff; box-shadow: 0 2px 10px rgba(0,0,0,.16); color: #009026; font-weight: 700; font-size: 16px; }
.card { flex: none; width: 500px; height: 475px; padding: 0 32px; border-radius: 0 0 8px 8px; background: #fff; box-shadow: 0 4px 20px rgba(0,0,0,.09); display: flex; flex-direction: column; align-items: stretch; }
.icon { width: 24px; height: 24px; stroke: currentColor; stroke-width: 2; stroke-linecap: round; stroke-linejoin: round; }
.field { position: relative; height: 49px; border: 1px solid #ddd; border-radius: 5px; padding: 5px 11px; display: flex; font-size: 15.200px; line-height: 37px; }
.field span { margin-left: 5px; }
.field .icon { color: #bbb; }
.filled { background: #e8ebff; color: #000; }
.message { height: 71px; color: #333; }
.message u { text-decoration: underline wavy #f11 1.400px; text-underline-offset: 2px; text-decoration-skip-ink: none; }
.grip { position: absolute; right: 1px; bottom: 1px; width: 9px; height: 9px; stroke: #555; }
label { height: 49px; line-height: 62px; color: #009026; font-weight: 700; font-size: 14px; }
.send { align-self: flex-start; margin-top: 27px; width: 201px; height: 40px; border-radius: 5px; background: #009026; color: #fff; font-size: 15.200px; display: flex; align-items: center; justify-content: center; gap: 8px; white-space: nowrap; }
.direct { margin-top: 24px; border-top: 1px solid #eee; padding-top: 24px; display: flex; flex-direction: column; align-items: center; }
.direct p { margin: 0; height: 21px; line-height: 21px; color: #888; font-size: 14px; white-space: nowrap; }
.direct a { margin-top: 8px; display: flex; align-items: center; gap: 8px; color: #ff8500; font-weight: 700; font-size: 16px; line-height: 24px; }
h2 { margin: 167px 0 17px; flex: none; height: 46px; line-height: 46px; font-weight: 400; font-size: 32px; color: #009026; }

/* map */
.map { position: relative; flex: none; width: 868px; height: 400px; border-radius: 16px; overflow: hidden; }
.tiles { display: block; }
.labels text { font-family: "Noto Sans", sans-serif; paint-order: stroke; stroke: rgba(255,255,255,.75); stroke-width: 6px; stroke-linejoin: round; fill: #333; font-size: 32px; }
.labels .suburb text { font-size: 40px; fill: #777; }
.labels .estate text { font-style: italic; fill: #666; font-size: 28px; }
.labels .park text { font-style: italic; fill: #129a45; font-size: 29px; }
.labels .big text { font-size: 33px; fill: #0a8f30; }
.labels .school text { font-style: italic; fill: #6b6b1a; font-size: 29px; }
.labels .street text { fill: #222; font-size: 27px; }
.labels .street .on-road { stroke: #fcdb9c; }
.labels .river text { font-style: italic; font-size: 34px; fill: #6078b8; stroke: none; }
.labels .river .small { font-size: 28px; }
.labels .station text { font-weight: 700; fill: #5434b0; font-size: 28px; }
.labels .parking { fill: #1677d8; font-size: 46px; stroke: none; }
.shield text { font: 27px "Noto Sans", sans-serif; fill: #4b4a35; }
.zoom { position: absolute; left: 10px; top: 10px; width: 34px; border: 2px solid rgba(0,0,0,.25); background-clip: padding-box; border-radius: 5px; display: flex; flex-direction: column; overflow: hidden; }
.zoom b { height: 30px; background: #fff; color: #000; font: bold 24px/30px "Liberation Sans", sans-serif; text-align: center; }
.zoom b:first-child { border-bottom: 1px solid #ccc; }
.popup { position: absolute; left: 5px; top: 169px; width: 181px; height: 45px; border-radius: 12px; background: #fff; box-shadow: 0 3px 14px rgba(0,0,0,.4); display: flex; justify-content: center; font: 13px/43px "Liberation Sans", sans-serif; padding-right: 4px; white-space: nowrap; }
.popup::after { content: ""; position: absolute; left: 79px; top: 44px; width: 24px; height: 11px; background: #fff; clip-path: polygon(0 0, 100% 0, 50% 100%); }
.popup i { position: absolute; right: 4px; top: 0; font: 16px/24px "Liberation Sans", sans-serif; color: #757575; width: 16px; text-align: center; }
.marker { position: absolute; left: 83px; top: 220px; }
.attribution { position: absolute; right: 0; bottom: 0; height: 17px; padding: 0 5px; background: rgba(255,255,255,.8); font: 12px/17px "Liberation Sans", sans-serif; color: #333; white-space: nowrap; }
.attribution a { color: #0078a8; }
.attribution svg { margin-right: 4px; vertical-align: -1px; }

/* scrollbar */
.scrollbar { flex: none; width: 15px; background: #f0f0f0; display: flex; flex-direction: column; align-items: center; }
.scrollbar .up { margin-top: 6px; border: 4px solid transparent; border-top: 0; border-bottom-color: #505050; }
.scrollbar .thumb { margin-top: auto; width: 11px; height: 182px; background: #c1c1c1; }
.scrollbar .down { margin: 5px 0 6px; border: 4px solid transparent; border-bottom: 0; border-top-color: #a0a0a0; }
```
